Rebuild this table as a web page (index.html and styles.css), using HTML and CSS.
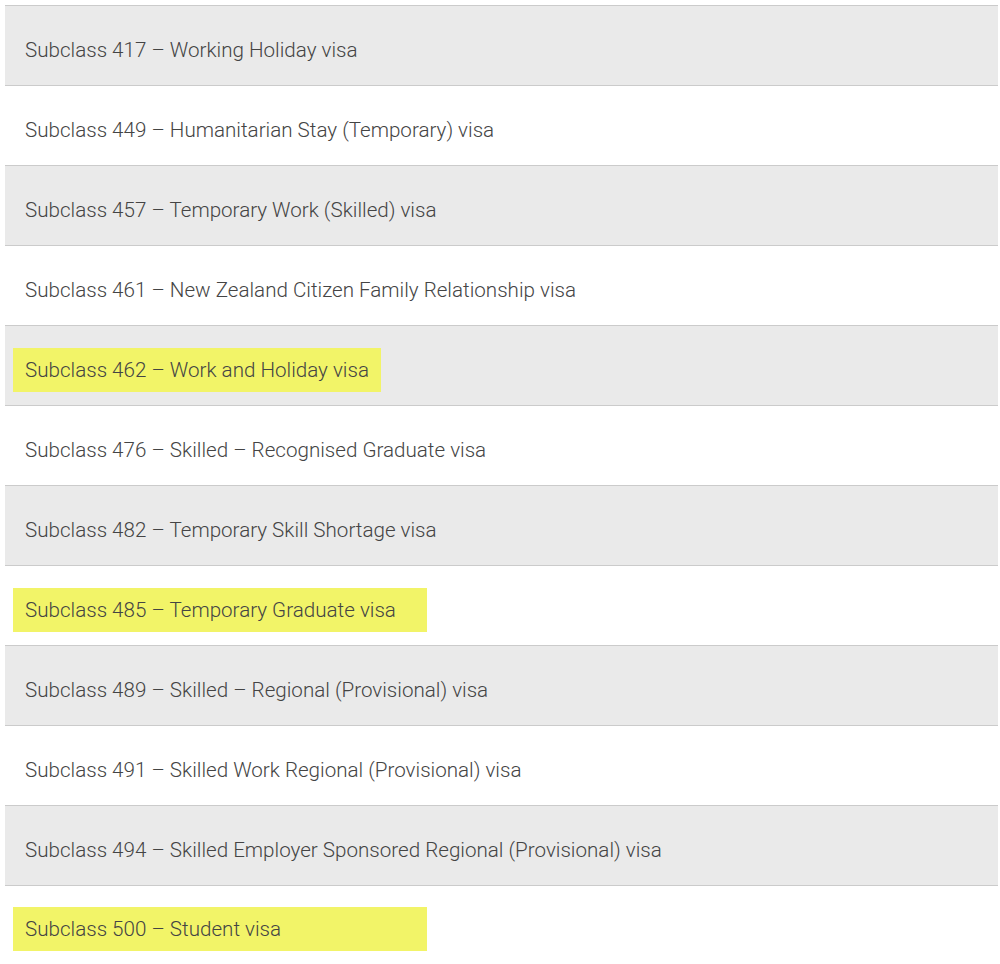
FILE: index.html
```html
<!DOCTYPE html>
<html lang="en">
<head>
<meta charset="utf-8">
<title>Visa subclasses</title>
<link rel="stylesheet" href="styles.css">
</head>
<body>
<ul class="visa-list">
  <li class="row shaded"><span class="label">Subclass 417 – Working Holiday visa</span></li>
  <li class="row"><span class="label">Subclass 449 – Humanitarian Stay (Temporary) visa</span></li>
  <li class="row shaded"><span class="label">Subclass 457 – Temporary Work (Skilled) visa</span></li>
  <li class="row"><span class="label">Subclass 461 – New Zealand Citizen Family Relationship visa</span></li>
  <li class="row shaded"><span class="label mark mark-short">Subclass 462 – Work and Holiday visa</span></li>
  <li class="row"><span class="label">Subclass 476 – Skilled – Recognised Graduate visa</span></li>
  <li class="row shaded"><span class="label">Subclass 482 – Temporary Skill Shortage visa</span></li>
  <li class="row"><span class="label mark mark-long">Subclass 485 – Temporary Graduate visa</span></li>
  <li class="row shaded"><span class="label">Subclass 489 – Skilled – Regional (Provisional) visa</span></li>
  <li class="row"><span class="label">Subclass 491 – Skilled Work Regional (Provisional) visa</span></li>
  <li class="row shaded"><span class="label">Subclass 494 – Skilled Employer Sponsored Regional (Provisional) visa</span></li>
  <li class="row"><span class="label mark mark-long">Subclass 500 – Student visa</span></li>
</ul>
</body>
</html>
```
FILE: styles.css
```css
html, body {
  margin: 0;
  padding: 0;
  background: #ffffff;
}

body {
  font-family: Roboto, "Liberation Sans", sans-serif;
  font-weight: 300;
  color: #444444;
}

.visa-list {
  list-style: none;
  margin: 0;
  padding: 5px 2px 0 5px;
}

.row {
  box-sizing: border-box;
  height: 80px;
  border-top: 1px solid #cbcbcb;
  display: flex;
  align-items: center;
  padding-top: 8px;
  background: #ffffff;
}

.row:last-child {
  border-bottom: 1px solid #cbcbcb;
}

.row.shaded {
  background: #eaeaea;
}

.label {
  font-size: 20.6px;
  line-height: 24px;
  padding-left: 20px;
}

.mark {
  background: #f2f468;
  margin-left: 8px;
  padding: 10px 0 10px 12px;
  display: inline-block;
  box-sizing: border-box;
  height: 44px;
}

.mark-short {
  width: 368px;
}

.mark-long {
  width: 414px;
}
```
